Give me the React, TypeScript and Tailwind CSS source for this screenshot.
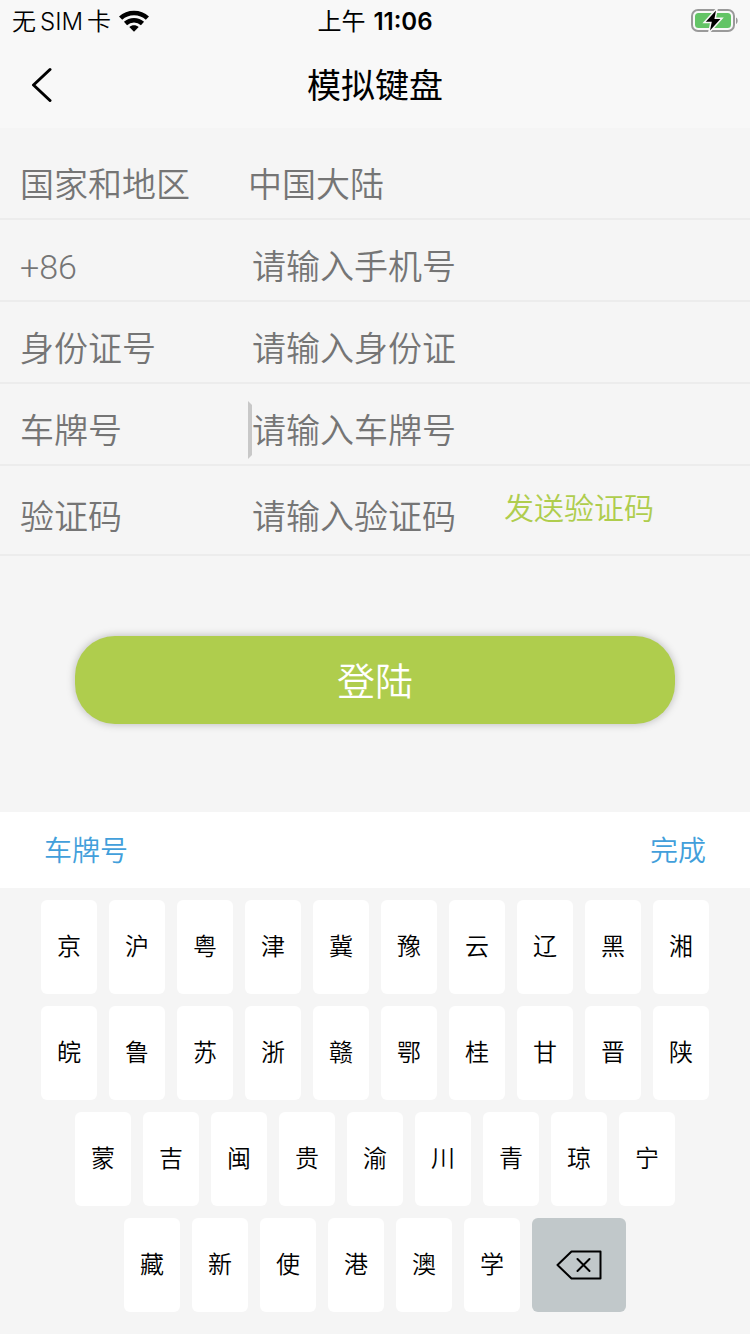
import { useState } from 'react';

const KEY_ROWS = [
  ['京', '沪', '粤', '津', '冀', '豫', '云', '辽', '黑', '湘'],
  ['皖', '鲁', '苏', '浙', '赣', '鄂', '桂', '甘', '晋', '陕'],
  ['蒙', '吉', '闽', '贵', '渝', '川', '青', '琼', '宁'],
  ['藏', '新', '使', '港', '澳', '学'],
];

interface FieldProps {
  id: string;
  label: string;
  placeholder: string;
  value: string;
  onChange: (value: string) => void;
  active?: boolean;
}

function Field({ id, label, placeholder, value, onChange, active = false }: FieldProps) {
  return (
    <div className="flex h-[82px] items-center border-b-2 border-[#ececec] pt-3 pl-5">
      <label htmlFor={id} className="w-[228px] shrink-0 pt-[2px]">
        {label}
      </label>
      <input
        id={id}
        value={value}
        onChange={(e) => onChange(e.target.value)}
        placeholder={placeholder}
        className={
          active
            ? 'h-[58px] min-w-0 flex-1 border-4 border-transparent border-l-[#c8c8c8] bg-transparent pt-[2px] outline-none placeholder:text-[#757575]'
            : 'h-[58px] min-w-0 flex-1 border-4 border-transparent bg-transparent pt-[2px] outline-none placeholder:text-[#757575]'
        }
      />
    </div>
  );
}

function StatusBar() {
  return (
    <div className="grid h-10 grid-cols-3 items-center px-3 text-2xl leading-10">
      <div className="flex items-center gap-1 font-[350]">
        <span className="pt-[2px]">无</span>
        <span className="pt-[2px]">SIM</span>
        <span className="pt-[2px]">卡</span>
        <svg className="ml-1" width="30" height="22" viewBox="0 0 30 22" aria-hidden="true">
          <g fill="none" stroke="#000" strokeWidth="4.6">
            <path d="M1.6 8.2C9 1.2 21 1.2 28.4 8.2" />
            <path d="M6.5 13.5c4.7-4.4 12.3-4.4 17 0" />
          </g>
          <path d="M10.3 17c2.7-2.4 6.7-2.4 9.4 0L15 21.7z" />
        </svg>
      </div>
      <div className="flex justify-center gap-2 pt-[2px]">
        <span>上午</span>
        <span className="font-semibold">11:06</span>
      </div>
      <svg className="justify-self-end" width="48" height="24" viewBox="0 0 48 24" aria-hidden="true">
        <rect x="2" y="1" width="42" height="21" rx="6" fill="none" stroke="#9a9a9a" strokeWidth="2" />
        <path d="M46 8.5c2.2 1.2 2.2 5.3 0 6.5z" fill="#9a9a9a" />
        <rect x="5" y="4" width="36" height="15" rx="3.5" fill="#63c466" />
        <path
          d="M26 1.5 15.8 12.8h6L20 21.5 30.4 10h-6z"
          fill="#000"
          stroke="#f8f8f8"
          strokeWidth="3"
          paintOrder="stroke"
        />
      </svg>
    </div>
  );
}

export default function App() {
  const [phone, setPhone] = useState('');
  const [idCard, setIdCard] = useState('');
  const [plate, setPlate] = useState('');
  const [code, setCode] = useState('');

  return (
    <div className="flex min-h-screen flex-col bg-[#f5f5f5] font-['Inter','Noto_Sans_CJK_SC',sans-serif] text-black">
      <header className="bg-[#f8f8f8]">
        <StatusBar />
        <div className="grid h-[88px] grid-cols-[80px_1fr_80px] items-center">
          <button type="button" aria-label="返回" className="flex h-full items-center pl-[30px]">
            <svg width="24" height="36" viewBox="0 0 24 36" fill="none" stroke="#000" strokeWidth="3" strokeLinecap="round" strokeLinejoin="round">
              <path d="M20 3.5 3.5 19 20 34.5" />
            </svg>
          </button>
          <h1 className="pt-1 text-center text-[34px] leading-[48px]">模拟键盘</h1>
        </div>
      </header>

      <main>
        <form onSubmit={(e) => e.preventDefault()}>
          <div className="pt-[10px] font-['Roboto','Noto_Sans_CJK_SC',sans-serif] text-[34px] leading-[48px] font-[350] text-[#757575]">
            <div className="flex h-[82px] items-center border-b-2 border-[#ececec] pt-3 pl-5">
              <span className="w-[228px] shrink-0 pt-[2px]">国家和地区</span>
              <span className="pt-[2px]">中国大陆</span>
            </div>
            <Field id="phone" label="+86" placeholder="请输入手机号" value={phone} onChange={setPhone} />
            <Field id="idCard" label="身份证号" placeholder="请输入身份证" value={idCard} onChange={setIdCard} />
            <Field id="plate" label="车牌号" placeholder="请输入车牌号" value={plate} onChange={setPlate} active />
            <div className="flex h-[90px] items-center border-b-2 border-[#ececec] pt-3 pl-5">
              <label htmlFor="code" className="w-[228px] shrink-0 pt-[2px]">
                验证码
              </label>
              <input
                id="code"
                value={code}
                onChange={(e) => setCode(e.target.value)}
                placeholder="请输入验证码"
                className="h-[58px] w-64 border-4 border-transparent bg-transparent pt-[2px] outline-none placeholder:text-[#757575]"
              />
              <button type="button" className="pb-[14px] text-[30px] text-[#afcd4d]">
                发送验证码
              </button>
            </div>
          </div>
          <button
            type="submit"
            className="mx-auto mt-20 mb-[88px] block h-[88px] w-4/5 rounded-[40px] bg-[#afcd4d] pt-[2px] text-[38px] font-[350] text-white shadow-[0_0_8px_rgba(0,0,0,0.25)]"
          >
            登陆
          </button>
        </form>
      </main>

      <section className="mt-auto" aria-label="车牌键盘">
        <div className="flex h-[76px] items-center justify-between bg-white px-11 pt-[2px] text-[28px] font-[350] text-[#429fdb]">
          <span>车牌号</span>
          <button type="button">完成</button>
        </div>
        <div className="flex flex-col gap-3 pt-3 pb-[22px]">
          {KEY_ROWS.map((row, i) => (
            <div key={i} className="flex justify-center gap-3">
              {row.map((char) => (
                <button
                  key={char}
                  type="button"
                  onClick={() => setPlate(plate + char)}
                  className="h-[94px] w-14 rounded-md bg-white text-2xl font-[350]"
                >
                  {char}
                </button>
              ))}
              {i === KEY_ROWS.length - 1 && (
                <button
                  type="button"
                  aria-label="删除"
                  onClick={() => setPlate(plate.slice(0, -1))}
                  className="flex size-[94px] items-center justify-center rounded-md bg-[#c1c8ca]"
                >
                  <svg width="46" height="30" viewBox="0 0 46 30" fill="none" stroke="#000" strokeWidth="2" strokeLinecap="round" strokeLinejoin="round">
                    <path d="M15.5 1.5H44.5V28.5H15.5L1.5 15z" />
                    <path d="m21.5 9 12 12m0-12-12 12" />
                  </svg>
                </button>
              )}
            </div>
          ))}
        </div>
      </section>
    </div>
  );
}
